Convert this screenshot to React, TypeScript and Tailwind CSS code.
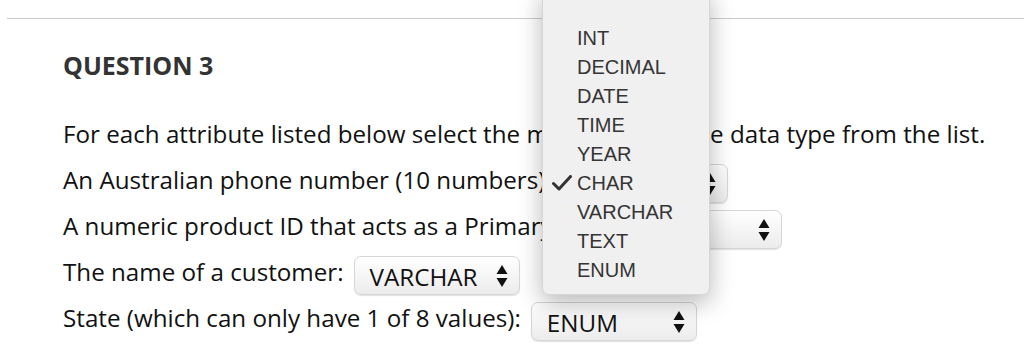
import React from 'react';

const OPTIONS = ['', 'INT', 'DECIMAL', 'DATE', 'TIME', 'YEAR', 'CHAR', 'VARCHAR', 'TEXT', 'ENUM'];

function Arrows() {
  return (
    <svg width="12" height="22" viewBox="0 0 12 22" className="shrink-0">
      <path d="M6 0 L11.5 9 L0.5 9 Z" fill="#111" />
      <path d="M0.5 13 L11.5 13 L6 22 Z" fill="#111" />
    </svg>
  );
}

function Select({ value }: { value: string }) {
  return (
    <div className="mt-[7px] ml-[10px] flex h-[39px] w-[166px] shrink-0 items-center justify-between rounded-[7px] border border-[#d6d6d6] bg-gradient-to-b from-white to-[#ececec] pl-[15px] pr-[11px] shadow-[0_1px_1px_rgba(0,0,0,0.12)]">
      <span className="pt-[2px] leading-[37px] text-[#111]">{value}</span>
      <Arrows />
    </div>
  );
}

function Row({ label, value }: { label: string; value?: string }) {
  return (
    <div className="flex h-[46px] items-start">
      <span className="whitespace-nowrap leading-[46px]">{label}</span>
      {value !== undefined && <Select value={value} />}
    </div>
  );
}

export default function App() {
  return (
    <div
      className="relative h-[353px] w-[1024px] overflow-hidden bg-white"
      style={{ fontFamily: '"Open Sans", sans-serif' }}
    >
      <div className="ml-[7px] mt-[18px] border-t border-[#cbcbcb]">
        <div className="pl-[56px]">
          <h2 className="mt-[30px] text-[25px] font-bold leading-[32px] text-[#333]">QUESTION 3</h2>
          <div className="mt-[30px] text-[24.2px] text-[#111]">
            <Row label="For each attribute listed below select the most appropriate data type from the list." />
            <Row label="An Australian phone number (10 numbers):" value="CHAR" />
            <Row label="A numeric product ID that acts as a Primary Key:" value="INT" />
            <Row label="The name of a customer:" value="VARCHAR" />
            <Row label="State (which can only have 1 of 8 values):" value="ENUM" />
          </div>
        </div>
      </div>

      <div
        className="absolute left-[542px] top-[-12px] w-[168px] rounded-b-[7px] border border-[#d6d6d6] bg-[#f0f0f0] pb-[10px] pt-[5px] text-[20px] text-[#353535] shadow-[0_8px_24px_rgba(0,0,0,0.28)]"
        style={{ fontFamily: '"Liberation Sans", Arial, sans-serif' }}
      >
        {OPTIONS.map((o, i) => (
          <div key={i} className="relative flex h-[29px] items-center pl-[34px]">
            {o === 'CHAR' && (
              <svg width="20" height="16" viewBox="0 0 20 16" className="absolute left-[9px] top-[7px]">
                <path d="M1.5 8.5 L7 14 L18.5 1.5" fill="none" stroke="#333" strokeWidth="3" strokeLinecap="round" strokeLinejoin="round" />
              </svg>
            )}
            {o}
          </div>
        ))}
      </div>
    </div>
  );
}
